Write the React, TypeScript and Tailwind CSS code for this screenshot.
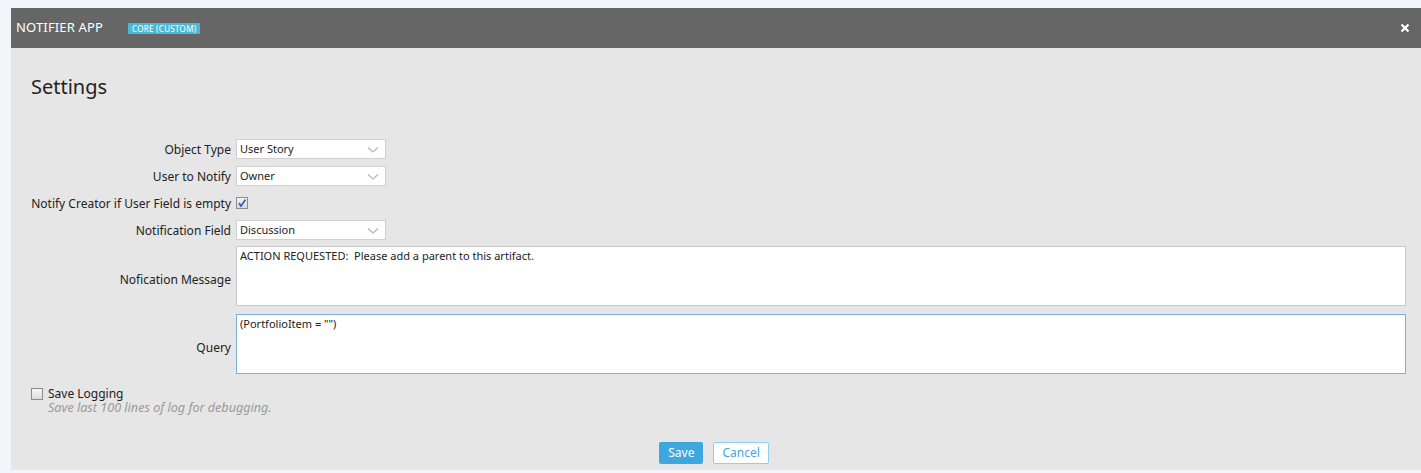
import React from "react";

const font = { fontFamily: '"Noto Sans", "Open Sans", sans-serif' };

function Chevron() {
  return (
    <svg width="12" height="8" viewBox="0 0 12 8" className="absolute right-[6px] top-[6px]">
      <path d="M1 1.5 L6 6 L11 1.5" fill="none" stroke="#b5b5b5" strokeWidth="1.2" />
    </svg>
  );
}

function Select({ value }: { value: string }) {
  return (
    <div className="relative w-[150px] h-[20px] bg-white border border-[#cfcfcf] text-[11px] leading-[18px] text-[#222] pl-[3px]">
      {value}
      <Chevron />
    </div>
  );
}

function Row({ label, children, shift = "pt-[3px]" }: { label: string; children: React.ReactNode; shift?: string }) {
  return (
    <div className="flex items-center">
      <div className={`w-[205px] text-right text-[12px] text-[#222] pr-[5px] shrink-0 whitespace-nowrap ${shift}`}>{label}</div>
      {children}
    </div>
  );
}

export default function App() {
  return (
    <div className="w-[1421px] h-[473px] bg-[#f4f5fa] pt-[8px] pl-[11px] overflow-hidden" style={font}>
      <div className="w-[1410px] h-[462px] bg-[#e6e6e6] flex flex-col">
        <div className="h-[40px] bg-[#666666] flex items-center pl-[5px] pr-[11px] shrink-0">
          <span className="text-white text-[13px] tracking-[0.15px]">NOTIFIER APP</span>
          <span className="ml-[25px] bg-[#4db8d6] text-white text-[8px] leading-[11px] px-[4px] rounded-[1px] tracking-[0.3px]">CORE (CUSTOM)</span>
          <div className="flex-1" />
          <svg width="10" height="10" viewBox="0 0 10 10">
            <path d="M1.5 1.5 L8.5 8.5 M8.5 1.5 L1.5 8.5" stroke="white" strokeWidth="2.2" />
          </svg>
        </div>
        <div className="pl-[20px] pr-[15px] pt-[25px] flex flex-col">
          <h1 className="text-[20px] leading-[28px] text-[#222]">Settings</h1>
          <div className="mt-[38px] flex flex-col gap-[7px]">
            <Row label="Object Type" shift="pt-[2px]"><Select value="User Story" /></Row>
            <Row label="User to Notify" shift="pt-[2px]"><Select value="Owner" /></Row>
            <Row label="Notify Creator if User Field is empty" shift="pt-[1px]">
              <div className="h-[20px] flex items-center">
                <div className="w-[12px] h-[12px] border border-[#8c8c8c] bg-gradient-to-b from-[#f4f4f4] to-[#d9d9d9] flex items-center justify-center">
                  <svg width="10" height="10" viewBox="0 0 10 10">
                    <path d="M2 5 L4 8 L8.5 1.5" fill="none" stroke="#3a52c8" strokeWidth="1.6" />
                  </svg>
                </div>
              </div>
            </Row>
            <Row label="Notification Field" shift="pt-[2px]"><Select value="Discussion" /></Row>
          </div>
          <div className="mt-[6px] flex flex-col gap-[8px]">
            <Row label="Nofication Message" shift="pt-[7px]">
              <div className="flex-1 h-[60px] bg-white border border-[#c8c8c8] text-[11px] text-[#222] px-[3px] py-[1px] leading-[16px]">
                ACTION REQUESTED:&nbsp; Please add a parent to this artifact.
              </div>
            </Row>
            <Row label="Query" shift="pt-[7px]">
              <div className="flex-1 h-[60px] bg-white border border-[#7eaedb] text-[11px] text-[#222] px-[3px] py-[1px] leading-[16px]">
                (PortfolioItem = "")
              </div>
            </Row>
          </div>
          <div className="mt-[13px] flex items-start">
            <div className="mt-[1px] w-[12px] h-[12px] border border-[#8c8c8c] bg-gradient-to-b from-[#f6f6f6] to-[#dcdcdc] shrink-0" />
            <div className="ml-[5px] flex flex-col">
              <span className="text-[12px] leading-[14px] text-[#222]">Save Logging</span>
              <span className="text-[12.6px] leading-[14px] italic text-[#9a9a9a]">Save last 100 lines of log for debugging.</span>
            </div>
          </div>
          <div className="mt-[27px] flex justify-center gap-[10px] pr-[9px]">
            <button className="h-[22px] px-[9px] bg-[#3ea8de] text-white text-[12px] rounded-[2px]">Save</button>
            <button className="h-[22px] px-[8px] bg-white text-[#3ea8de] text-[12px] border border-[#8ad1ee] rounded-[2px]">Cancel</button>
          </div>
        </div>
      </div>
    </div>
  );
}
